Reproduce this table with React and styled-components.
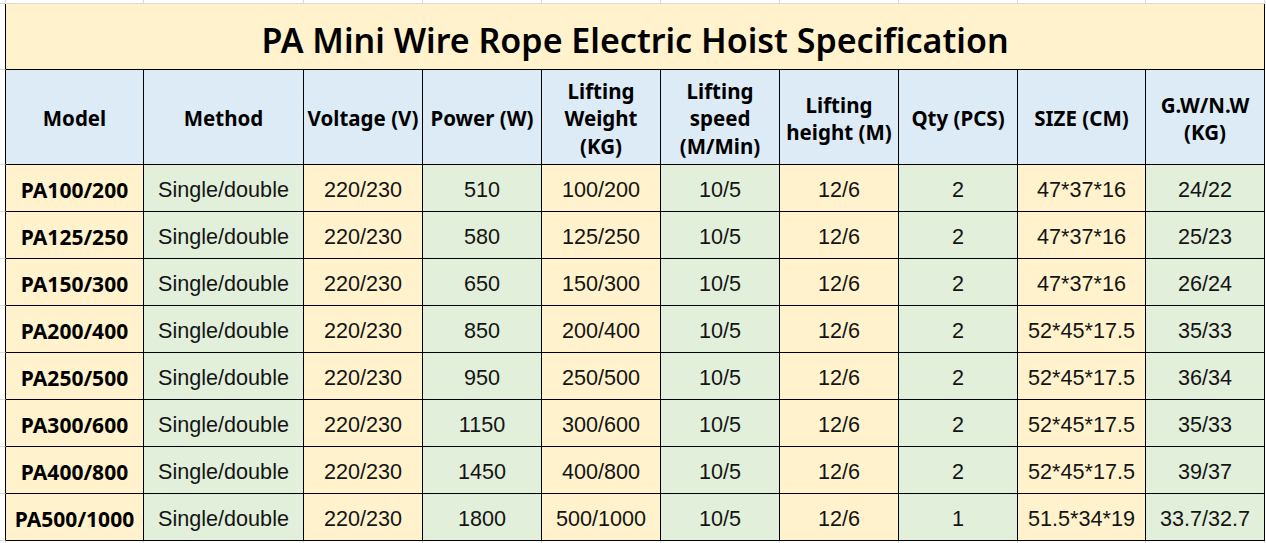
import React from 'react';
import styled, { createGlobalStyle } from 'styled-components';

const GlobalStyle = createGlobalStyle`
  html, body {
    margin: 0;
    padding: 0;
    background: #ffffff;
  }
  * {
    box-sizing: border-box;
  }
`;

const palette = {
  yellow: '#fff2cc',
  green: '#e2efda',
  blue: '#ddebf7',
  grid: '#d9d9d9',
  line: '#000000',
};

const Sheet = styled.div`
  display: grid;
  grid-template-columns: 6px 138px 160px repeat(6, 119px) 128px 119px;
  grid-auto-rows: 47px;
  width: 1266px;
`;

const StripCell = styled.div`
  height: ${(p) => p.h}px;
  border-right: 1px solid ${palette.grid};
  border-bottom: ${(p) => (p.last ? '0' : `1px solid ${palette.grid}`)};
`;

const Gutter = styled.div`
  border-right: 1px solid ${palette.line};
  border-bottom: 1px solid ${palette.grid};
`;

const TitleCell = styled.div`
  grid-column: 2 / -1;
  display: flex;
  align-items: center;
  justify-content: center;
  background: ${palette.yellow};
  border-right: 1px solid ${palette.line};
  border-bottom: 1px solid ${palette.line};
  font-family: 'Noto Sans', 'Open Sans', sans-serif;
  font-weight: 600;
  font-size: 34px;
  color: #000;
  padding-top: 6px;
`;

const HeadCell = styled.div`
  display: flex;
  align-items: center;
  justify-content: center;
  text-align: center;
  background: ${palette.blue};
  border-right: 1px solid ${palette.line};
  border-bottom: 1px solid ${palette.line};
  font-family: 'Noto Sans', 'Open Sans', sans-serif;
  font-weight: 700;
  font-size: 20.5px;
  line-height: 27.5px;
  color: #000;
  padding: 4px 1px 0;
`;

const DataCell = styled.div`
  display: flex;
  align-items: center;
  justify-content: center;
  white-space: nowrap;
  background: ${(p) => (p.tone === 'green' ? palette.green : palette.yellow)};
  border-right: 1px solid ${palette.line};
  border-bottom: 1px solid ${palette.line};
  font-family: ${(p) =>
    p.bold ? "'Noto Sans', 'Open Sans', sans-serif" : "'Liberation Sans', Arial, sans-serif"};
  font-weight: ${(p) => (p.bold ? 700 : 400)};
  font-size: ${(p) => (p.bold ? '21px' : '21.6px')};
  color: ${(p) => (p.bold ? '#000' : '#141414')};
  padding-top: 3px;
`;

const headers = [
  'Model',
  'Method',
  'Voltage (V)',
  'Power (W)',
  'Lifting Weight (KG)',
  'Lifting speed (M/Min)',
  'Lifting height (M)',
  'Qty (PCS)',
  'SIZE (CM)',
  'G.W/N.W (KG)',
];

const headerLines = {
  'Lifting Weight (KG)': ['Lifting', 'Weight', '(KG)'],
  'Lifting speed (M/Min)': ['Lifting', 'speed', '(M/Min)'],
  'Lifting height (M)': ['Lifting', 'height (M)'],
  'G.W/N.W (KG)': ['G.W/N.W', '(KG)'],
};

const rows = [
  ['PA100/200', 'Single/double', '220/230', '510', '100/200', '10/5', '12/6', '2', '47*37*16', '24/22'],
  ['PA125/250', 'Single/double', '220/230', '580', '125/250', '10/5', '12/6', '2', '47*37*16', '25/23'],
  ['PA150/300', 'Single/double', '220/230', '650', '150/300', '10/5', '12/6', '2', '47*37*16', '26/24'],
  ['PA200/400', 'Single/double', '220/230', '850', '200/400', '10/5', '12/6', '2', '52*45*17.5', '35/33'],
  ['PA250/500', 'Single/double', '220/230', '950', '250/500', '10/5', '12/6', '2', '52*45*17.5', '36/34'],
  ['PA300/600', 'Single/double', '220/230', '1150', '300/600', '10/5', '12/6', '2', '52*45*17.5', '35/33'],
  ['PA400/800', 'Single/double', '220/230', '1450', '400/800', '10/5', '12/6', '2', '52*45*17.5', '39/37'],
  ['PA500/1000', 'Single/double', '220/230', '1800', '500/1000', '10/5', '12/6', '1', '51.5*34*19', '33.7/32.7'],
];

const columns = Array.from({ length: 10 });

const App = () => {
  return (
    <>
      <GlobalStyle />
      <Sheet style={{ gridTemplateRows: `4px 66px 95px repeat(${rows.length}, 47px) 3px` }}>
        <StripCell h={4} />
        {columns.map((_, i) => (
          <StripCell key={`top-${i}`} h={4} />
        ))}

        <Gutter />
        <TitleCell>PA Mini Wire Rope Electric Hoist Specification</TitleCell>

        <Gutter />
        {headers.map((h) => (
          <HeadCell key={h}>
            <div>
              {(headerLines[h] || [h]).map((line) => (
                <div key={line}>{line}</div>
              ))}
            </div>
          </HeadCell>
        ))}

        {rows.map((row) => (
          <React.Fragment key={row[0]}>
            <Gutter />
            {row.map((value, i) => (
              <DataCell key={i} bold={i === 0} tone={i % 2 === 0 ? 'yellow' : 'green'}>
                {value}
              </DataCell>
            ))}
          </React.Fragment>
        ))}

        <StripCell h={3} last />
        {columns.map((_, i) => (
          <StripCell key={`bottom-${i}`} h={3} last />
        ))}
      </Sheet>
    </>
  );
};

export default App;
